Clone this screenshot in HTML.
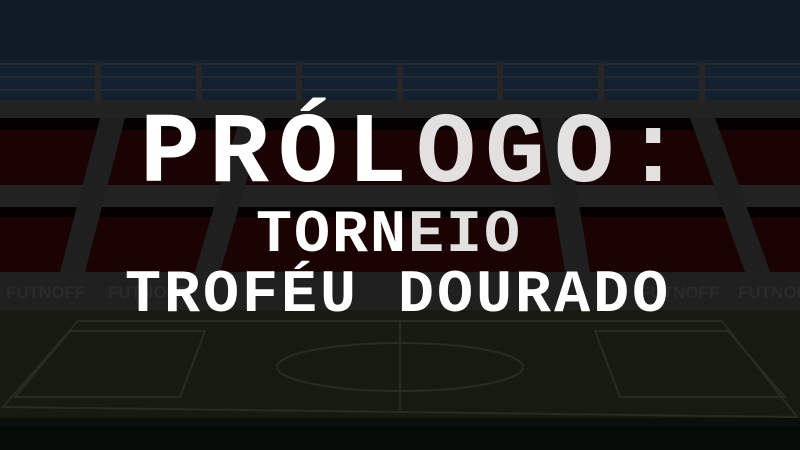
<!DOCTYPE html>
<html><head><meta charset="utf-8"><style>
html,body{margin:0;padding:0;width:800px;height:450px;overflow:hidden;background:#0f1a24}
.t{position:absolute;left:0;font-family:"Liberation Mono",monospace;font-weight:bold;color:#fff;white-space:pre;text-align:left;line-height:1}
.p{opacity:.88}
</style></head><body>
<svg width="800" height="450" style="position:absolute;left:0;top:0">
<rect x="0" y="0" width="800" height="60" fill="#0f1a24"/>
<rect x="0" y="60" width="800" height="42" fill="#122030"/>
<g stroke="#252a30" stroke-width="2">
<line x1="0" y1="64" x2="800" y2="64"/><line x1="0" y1="77" x2="800" y2="77"/><line x1="0" y1="90" x2="800" y2="90"/>
</g>
<g fill="#262626"><rect x="95" y="62" width="6" height="40"/><rect x="196" y="62" width="6" height="40"/><rect x="296" y="62" width="6" height="40"/><rect x="397" y="62" width="6" height="40"/><rect x="497" y="62" width="6" height="40"/><rect x="598" y="62" width="6" height="40"/><rect x="699" y="62" width="6" height="40"/></g>
<rect x="0" y="100" width="800" height="18" fill="#222"/>
<rect x="0" y="118" width="800" height="70" fill="#1c0303"/>
<rect x="0" y="118" width="800" height="12" fill="#040101"/>
<rect x="0" y="185" width="800" height="22" fill="#222"/>
<rect x="0" y="207" width="800" height="65" fill="#1c0303"/>
<rect x="0" y="207" width="800" height="10" fill="#040101"/>
<g fill="#1f1f1f">
<polygon points="100,118 125,118 85,272 60,272"/>
<polygon points="240,118 265,118 220,272 195,272"/>
<polygon points="690,118 715,118 770,272 745,272"/>
<polygon points="540,118 565,118 590,272 565,272"/>
</g>
<rect x="0" y="272" width="800" height="38" fill="#202020"/>
<g font-family="Liberation Sans,sans-serif" font-weight="bold" font-size="17" fill="#2a2a2a">
<text x="6" y="298">FUTNOFF</text><text x="108" y="298">FUTNOFF</text><text x="640" y="298">FUTNOFF</text><text x="738" y="298">FUTNOFF</text>
</g>
<rect x="0" y="310" width="800" height="110" fill="#151b0e"/>
<rect x="0" y="418" width="800" height="8" fill="#0b0e0b"/>
<rect x="0" y="426" width="800" height="24" fill="#050c07"/>
<g fill="none" stroke="#272c22" stroke-width="2">
<polygon points="78,321 722,321 797,417 3,407"/>
<polygon points="70,331 205,331 180,397 15,397"/>
<polygon points="595,331 728,331 785,397 620,397"/>
<line x1="400" y1="321" x2="400" y2="410"/>
<ellipse cx="400" cy="367" rx="123" ry="24"/>
</g>
</svg>
<div class="t" style="top:106px;left:140px;font-size:100px;letter-spacing:9px">PRÓL<span class="p">OGO:</span></div>
<div class="t" style="top:206px;left:256px;font-size:60px;letter-spacing:2px">TORN<span class="p">EIO</span></div>
<div class="t" style="top:266px;left:125px;font-size:60px;letter-spacing:3px">TROFÉU DOURADO</div>
</body></html>
